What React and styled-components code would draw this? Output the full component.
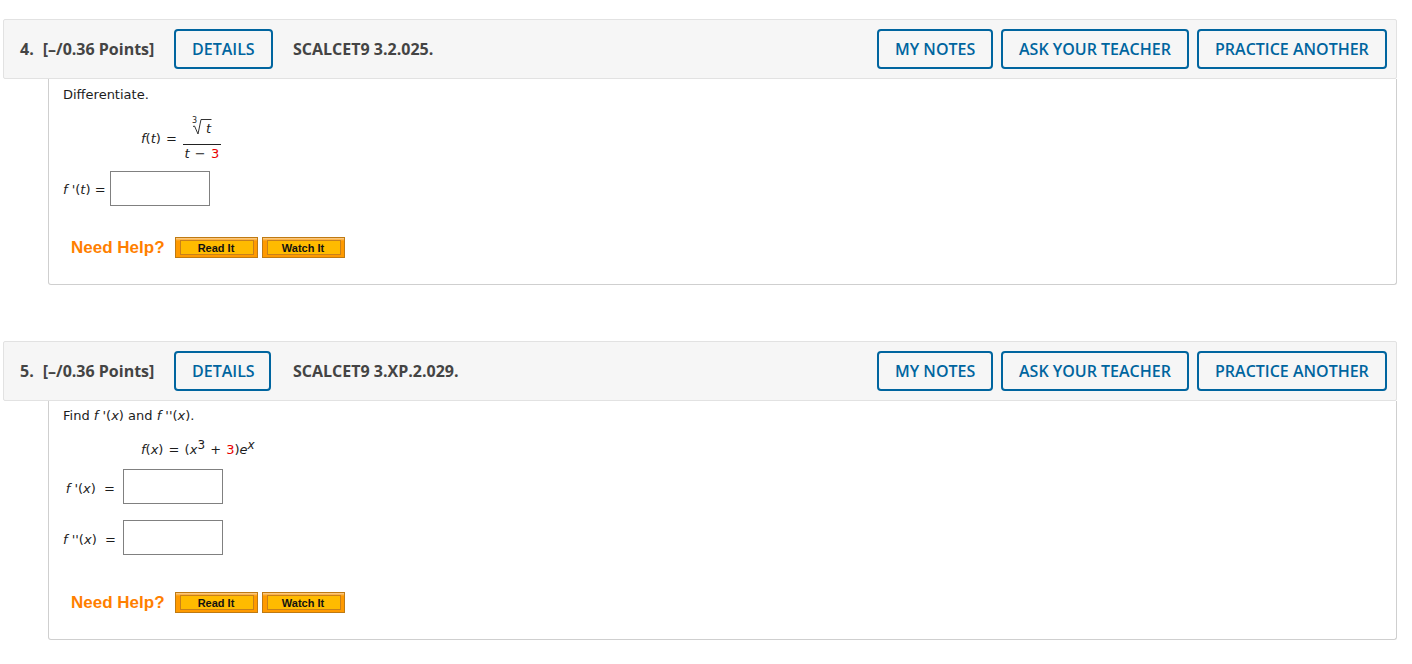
import styled, { createGlobalStyle } from "styled-components";

const GlobalStyle = createGlobalStyle`
  html, body {
    margin: 0;
    background: #fff;
  }
`;

function QuestionHeader({ number, code, detailsWidth }) {
  return (
    <Header>
      <Points><Num>{number}.</Num>[–/0.36 Points]</Points>
      <DetailsSlot>
        <HeaderButton $width={detailsWidth}>DETAILS</HeaderButton>
      </DetailsSlot>
      <Code>{code}</Code>
      <Actions>
        <HeaderButton $width={116}>MY NOTES</HeaderButton>
        <HeaderButton $width={188}>ASK YOUR TEACHER</HeaderButton>
        <HeaderButton $width={190}>PRACTICE ANOTHER</HeaderButton>
      </Actions>
    </Header>
  );
}

function HelpRow({ top }) {
  return (
    <Help $top={top}>
      <HelpLabel>Need Help?</HelpLabel>
      <HelpButton><HelpFace>Read It</HelpFace></HelpButton>
      <HelpButton><HelpFace>Watch It</HelpFace></HelpButton>
    </Help>
  );
}

function App() {
  return (
    <>
      <GlobalStyle />
      <Page>
        <Question>
          <QuestionHeader number="4" code="SCALCET9 3.2.025." detailsWidth={99} />
          <Body $height={206} $pad={7}>
            <Prompt>Differentiate.</Prompt>
            <FractionFormula>
              <FormulaLead><i>f</i>(<i>t</i>) =</FormulaLead>
              <Fraction>
                <Numerator>
                  <svg width="38" height="28" viewBox="0 0 38 28">
                    <path d="M10 10.5 L11.5 10 L15 18 L18 3.5 L28.5 3.5" fill="none" stroke="#333" strokeWidth="1" />
                  </svg>
                  <RootIndex>3</RootIndex>
                  <RootValue>t</RootValue>
                </Numerator>
                <Denominator><i>t</i> − <Red>3</Red></Denominator>
              </Fraction>
            </FractionFormula>
            <AnswerRow $top={9} $label={47}>
              <AnswerLabel $right={5} $drop={3}><i>f</i> '(<i>t</i>) =</AnswerLabel>
              <AnswerInput />
            </AnswerRow>
            <HelpRow top={31} />
          </Body>
        </Question>
        <Question>
          <QuestionHeader number="5" code="SCALCET9 3.XP.2.029." detailsWidth={97} />
          <Body $height={239} $pad={6}>
            <Prompt>Find <i>f</i> '(<i>x</i>) and <i>f</i> ''(<i>x</i>).</Prompt>
            <InlineFormula>
              <i>f</i>(<i>x</i>) = (<i>x</i><Sup>3</Sup> + <Red>3</Red>)<i>e</i><Sup><i>x</i></Sup>
            </InlineFormula>
            <AnswerRow $top={7} $label={60}>
              <AnswerLabel $right={8} $drop={4}><i>f</i> '(<i>x</i>)&nbsp; =</AnswerLabel>
              <AnswerInput />
            </AnswerRow>
            <AnswerRow $top={16} $label={60}>
              <AnswerLabel $right={8} $drop={4}><i>f</i> ''(<i>x</i>)&nbsp; =</AnswerLabel>
              <AnswerInput />
            </AnswerRow>
            <HelpRow top={37} />
          </Body>
        </Question>
      </Page>
    </>
  );
}

const Page = styled.div`
  padding: 19px 15px 0 3px;
  display: flex;
  flex-direction: column;
  gap: 56px;
`;

const Question = styled.section`
  display: flex;
  flex-direction: column;
`;

const Header = styled.header`
  height: 60px;
  box-sizing: border-box;
  display: flex;
  align-items: center;
  padding: 0 9px 0 16px;
  background: #f6f6f6;
  border: 1px solid #e2e2e2;
  border-radius: 2px;
  font-family: "Open Sans", sans-serif;
  font-size: 16px;
  color: #444;
`;

const Points = styled.div`
  width: 154px;
  font-size: 16px;
  font-weight: 700;
  white-space: nowrap;
`;

const Num = styled.span`
  margin-right: 9px;
`;

const DetailsSlot = styled.div`
  width: 119px;
`;

const HeaderButton = styled.button`
  display: block;
  width: ${(p) => p.$width}px;
  height: 40px;
  padding: 0 0 0 16px;
  box-sizing: border-box;
  background: #f6f6f6;
  border: 2px solid #00659f;
  border-radius: 4px;
  color: #00659f;
  font-family: "Open Sans", sans-serif;
  font-weight: 600;
  font-size: 16px;
  text-align: left;
  white-space: nowrap;
`;

const Code = styled.div`
  font-weight: 700;
  font-size: 16px;
`;

const Actions = styled.div`
  margin-left: auto;
  display: flex;
  gap: 8px;
`;

const Body = styled.div`
  height: ${(p) => p.$height}px;
  box-sizing: border-box;
  margin-left: 45px;
  padding: ${(p) => p.$pad}px 14px 0;
  background: #fff;
  border: 1px solid #cfcfcf;
  border-top: 0;
  border-radius: 0 0 3px 3px;
  font-family: "DejaVu Sans", Verdana, sans-serif;
  font-size: 13px;
  line-height: 18px;
  color: #1c1c1c;
`;

const Prompt = styled.div`
  height: 18px;
`;

const FractionFormula = styled.div`
  display: flex;
  align-items: flex-start;
  margin: 12px 0 0 78px;
  gap: 6px;
  height: 46px;
  word-spacing: 1px;
`;

const FormulaLead = styled.span`
  margin-top: 14px;
  white-space: nowrap;
`;

const Fraction = styled.div`
  width: 38px;
  display: flex;
  flex-direction: column;
  align-items: center;
`;

const Numerator = styled.div`
  position: relative;
  height: 29px;
  width: 38px;
  border-bottom: 1px solid #222;
  box-sizing: border-box;
`;

const RootIndex = styled.span`
  position: absolute;
  left: 9px;
  top: 0;
  font-size: 8px;
  line-height: 10px;
`;

const RootValue = styled.i`
  position: absolute;
  left: 23px;
  top: 4px;
`;

const Denominator = styled.div`
  white-space: nowrap;
  line-height: 18px;
`;

const Red = styled.span`
  color: #e80000;
`;

const InlineFormula = styled.div`
  margin: 13px 0 0 78px;
  height: 24px;
  line-height: 24px;
  white-space: nowrap;
  word-spacing: 1px;
`;

const Sup = styled.sup`
  font-size: 12px;
  line-height: 0;
  vertical-align: 5px;
`;

const AnswerRow = styled.div`
  margin-top: ${(p) => p.$top}px;
  display: grid;
  grid-template-columns: ${(p) => p.$label}px 100px;
  align-items: center;
`;

const AnswerLabel = styled.span`
  white-space: nowrap;
  text-align: right;
  box-sizing: border-box;
  padding: ${(p) => p.$drop}px ${(p) => p.$right}px 0 0;
`;

const AnswerInput = styled.input`
  width: 100px;
  height: 35px;
  box-sizing: border-box;
  background: #fff;
  border: 1px solid #808080;
  border-radius: 0;
  margin: 0;
  padding: 0 4px;
`;

const Help = styled.div`
  margin: ${(p) => p.$top}px 0 0 8px;
  display: flex;
  align-items: center;
  gap: 4px;
`;

const HelpLabel = styled.span`
  width: 100px;
  font-family: "Liberation Sans", Arial, sans-serif;
  font-size: 17px;
  font-weight: 700;
  color: #ff7f00;
  white-space: nowrap;
`;

const HelpButton = styled.button`
  display: flex;
  width: 83px;
  height: 21px;
  box-sizing: border-box;
  padding: 2px 3px 2px 4px;
  border: 1px solid #bf7a12;
  background: linear-gradient(#f9cf97 0, #ff9a00 3px);
`;

const HelpFace = styled.span`
  flex: 1;
  height: 15px;
  box-sizing: border-box;
  padding-right: 2px;
  border: 1px solid #c8801a;
  background: #ffbb00;
  font-family: "Liberation Sans", Arial, sans-serif;
  font-size: 11px;
  font-weight: 700;
  line-height: 15px;
  text-align: center;
  color: #111;
`;

export default App;
